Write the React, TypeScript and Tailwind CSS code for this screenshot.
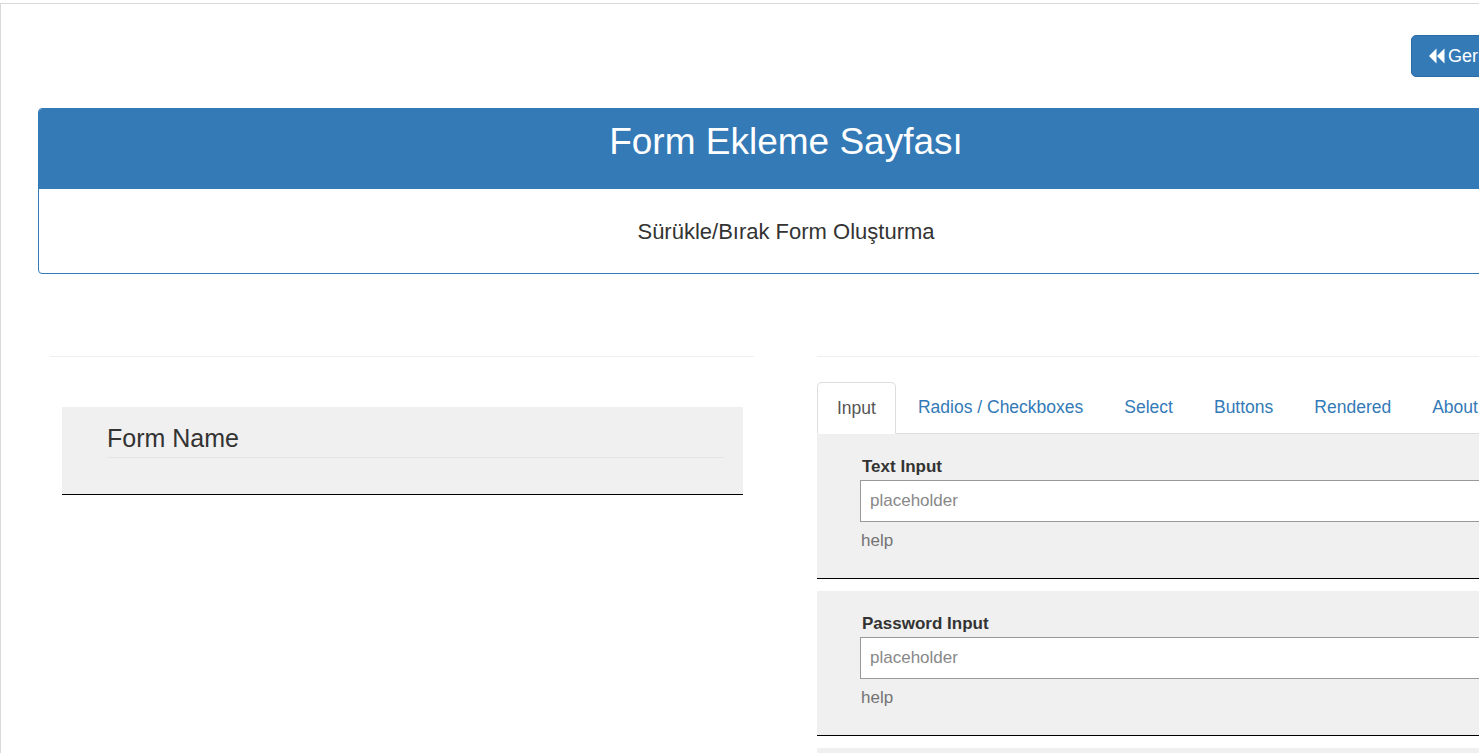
import React from "react";

const font = { fontFamily: '"Liberation Sans", Arial, sans-serif' };

function FieldBox({ label, type }: { label: string; type: string }) {
  return (
    <div className="bg-[#f0f0f0] border-b border-black pl-[43px] pt-[21px] pb-[25px] mb-[12px]">
      <div className="text-[17px] font-bold leading-[24px] text-[#333] pl-[2px]">{label}</div>
      <div className="mt-[1px] h-[42px] w-[700px] bg-white border border-[#999] flex items-center px-[9px]">
        <input
          type={type}
          placeholder="placeholder"
          className="w-full outline-none text-[17px] text-[#555] placeholder:text-[#888] bg-transparent"
          style={font}
        />
      </div>
      <div className="mt-[7px] text-[17px] leading-[24px] text-[#737373] pl-px">help</div>
    </div>
  );
}

export default function App() {
  const tabs = ["Input", "Radios / Checkboxes", "Select", "Buttons", "Rendered", "About"];
  return (
    <div className="w-[1479px] h-[753px] overflow-hidden bg-white pt-[3px]" style={font}>
      <div className="border-t border-l border-[#d9d9d9] w-[1600px] h-[800px] text-[#333]">
        <div className="w-[1571px] pl-[37px] pr-[38px]">
          {/* Button row */}
          <div className="flex justify-end pt-[31px] pr-[12px]">
            <button className="h-[42px] w-[111px] bg-[#337ab7] border border-[#2e6da4] rounded-[5px] text-white text-[18px] flex items-center pl-[16px] gap-[3px]">
              <svg width="17" height="16" viewBox="0 0 17 16" fill="white">
                <path d="M8.5 0.5 L1 8 L8.5 15.5 Z" />
                <path d="M16.5 0.5 L9 8 L16.5 15.5 Z" />
              </svg>
              <span>Geri</span>
            </button>
          </div>

          {/* Panel */}
          <div className="mt-[31px] border border-[#337ab7] rounded-[4px] overflow-hidden">
            <div className="h-[80px] bg-[#337ab7] text-white text-center text-[37px] leading-[40px] pt-[13px]">
              Form Ekleme Sayfası
            </div>
            <div className="h-[84px] flex items-center justify-center text-[22px] text-[#333]">
              Sürükle/Bırak Form Oluşturma
            </div>
          </div>

          {/* Columns */}
          <div className="flex mt-[82px] pl-[12px] gap-[63px]">
            <div className="w-[704px]">
              <div className="border-t border-[#eee]" />
              <div className="mt-[50px] ml-[12px] mr-[11px] bg-[#f0f0f0] border-b border-black pl-[45px] pr-[19px] pt-[12px] pb-[36px]">
                <div className="text-[25px] leading-[38px] text-[#333] border-b border-[#e5e5e5]">Form Name</div>
              </div>
            </div>
            <div className="w-[704px]">
              <div className="border-t border-[#eee]" />
              <div className="mt-[25px] flex border-b border-[#ddd]">
                {tabs.map((t, i) => (
                  <div
                    key={t}
                    className={
                      i === 0
                        ? "mr-[2px] -mb-px pl-[19px] pr-[19px] h-[52px] flex items-center text-[17.5px] text-[#555] bg-white border border-[#ddd] border-b-white rounded-t-[5px]"
                        : "mr-[2px] pl-[19px] pr-[18px] h-[51px] flex items-center text-[17.5px] text-[#337ab7] border border-transparent whitespace-nowrap"
                    }
                  >
                    {t}
                  </div>
                ))}
              </div>
              <div className="w-[800px]">
                <FieldBox label="Text Input" type="text" />
                <FieldBox label="Password Input" type="password" />
                <FieldBox label="Search Input" type="text" />
              </div>
            </div>
          </div>
        </div>
      </div>
    </div>
  );
}
